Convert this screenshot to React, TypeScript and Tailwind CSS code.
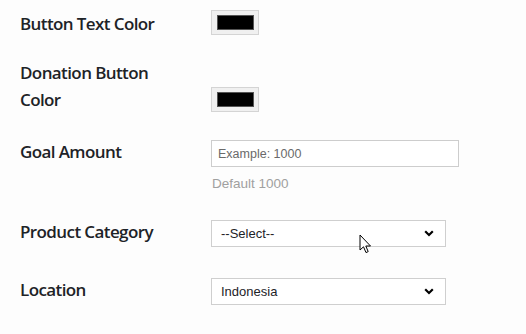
import React from "react";

const labelCls =
  "w-[191px] shrink-0 text-[17px] leading-[27px] font-semibold tracking-[-0.6px] text-[#1d2327] [font-family:'Open_Sans',sans-serif]";

function ColorButton() {
  return (
    <button className="flex h-[25px] w-[48px] items-center justify-center border border-[#d4d4d4] bg-[#f0f0f0]">
      <span className="block h-[15px] w-[37px] border border-[#555] bg-black" />
    </button>
  );
}

function Chevron() {
  return (
    <svg width="10" height="7" viewBox="0 0 10 7" className="text-black">
      <path d="M1.2 1.3 L5 5 L8.8 1.3" fill="none" stroke="currentColor" strokeWidth="2.2" />
    </svg>
  );
}

function SelectBox({ value }: { value: string }) {
  return (
    <div className="flex h-[27px] w-[235px] items-center justify-between border border-[#cfcfcf] bg-white pl-[9px] pr-[11px] text-[13px] text-[#1d2327] [font-family:'Liberation_Sans',Arial,sans-serif]">
      <span>{value}</span>
      <Chevron />
    </div>
  );
}

function Cursor() {
  return (
    <svg
      width="13"
      height="20"
      viewBox="0 0 13 20"
      className="pointer-events-none absolute left-[359px] top-[234px]"
    >
      <path
        d="M1 1 L1 16 L4.5 12.8 L7 18.6 L9.2 17.6 L6.8 12 L11.5 12 Z"
        fill="#fff"
        stroke="#000"
        strokeWidth="1"
        strokeLinejoin="round"
      />
    </svg>
  );
}

export default function App() {
  return (
    <div className="relative h-[334px] w-[526px] overflow-hidden bg-[#fdfdfd] pl-[20px] pt-[10px]">
      {/* Button Text Color */}
      <div className="flex items-start">
        <div className={labelCls}>Button Text Color</div>
        <ColorButton />
      </div>

      {/* Donation Button Color */}
      <div className="mt-[22px] flex items-start">
        <div className={labelCls}>
          Donation Button
          <br />
          Color
        </div>
        <div className="pt-[28px]">
          <ColorButton />
        </div>
      </div>

      {/* Goal Amount */}
      <div className="mt-[25px] flex items-start">
        <div className={labelCls}>Goal Amount</div>
        <div className="pt-[2px] [font-family:'Liberation_Sans',Arial,sans-serif]">
          <input
            type="text"
            placeholder="Example: 1000"
            className="h-[27px] w-[248px] border border-[#cdcdcd] bg-white px-[6px] text-[12.5px] text-[#333] outline-none placeholder:text-[#6a6a6a]"
          />
          <p className="mt-[7px] pl-[1px] text-[13.5px] leading-[20px] text-[#a0a0a0]">Default 1000</p>
        </div>
      </div>

      {/* Product Category */}
      <div className="mt-[24px] flex items-start">
        <div className={labelCls}>Product Category</div>
        <div className="pt-[2px]">
          <SelectBox value="--Select--" />
        </div>
      </div>

      {/* Location */}
      <div className="mt-[29px] flex items-start">
        <div className={labelCls}>Location</div>
        <div className="pt-[2px]">
          <SelectBox value="Indonesia" />
        </div>
      </div>

      <Cursor />
    </div>
  );
}
